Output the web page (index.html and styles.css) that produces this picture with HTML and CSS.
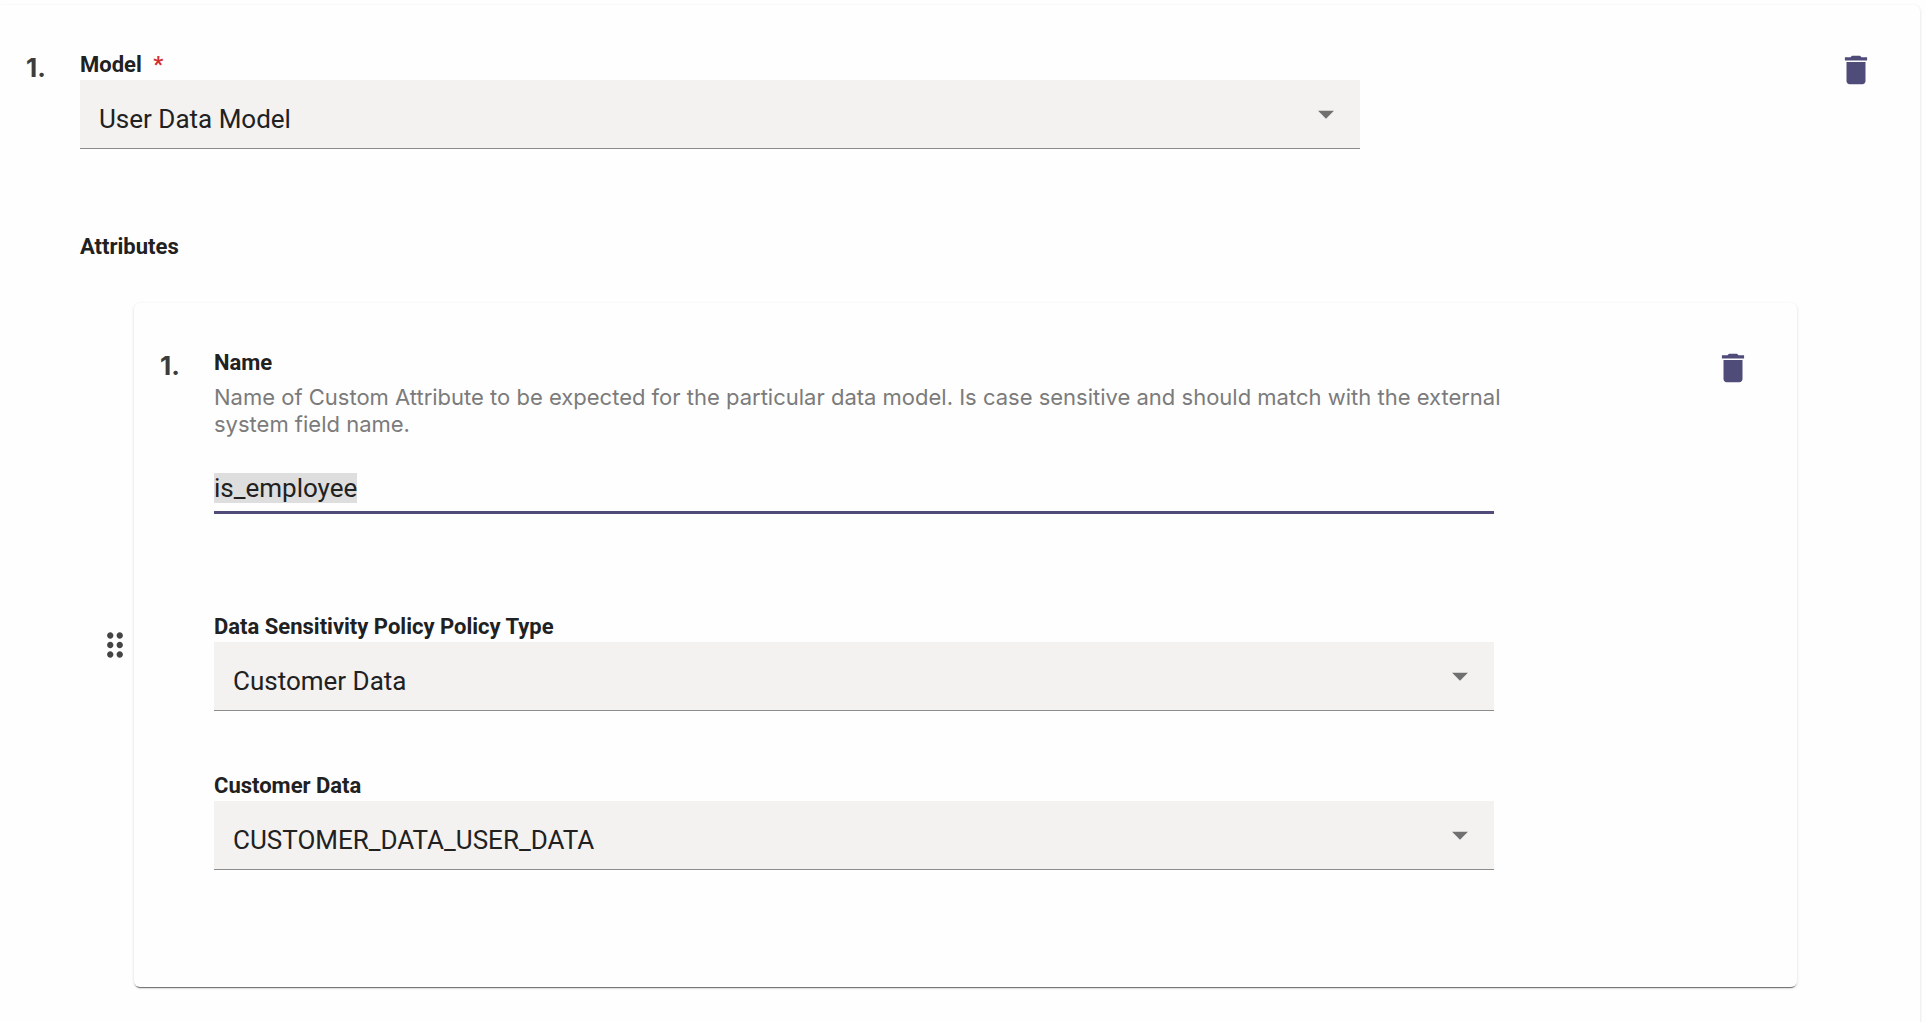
FILE: index.html
```html
<!DOCTYPE html>
<html lang="en">
<head>
  <meta charset="UTF-8">
  <title>Custom attributes</title>
  <link rel="stylesheet" href="styles.css">
</head>
<body>
  <form class="card model-card">
    <span class="number">1.</span>
    <div class="content">
      <div class="model-field">
        <label for="model">Model <span class="required">*</span></label>
        <div class="select-box">
          <select id="model">
            <option>User Data Model</option>
          </select>
          <svg class="arrow" viewBox="0 0 24 24"><path d="M7 10l5 5 5-5z"/></svg>
        </div>
      </div>

      <h2>Attributes</h2>

      <div class="attribute">
        <svg class="drag" viewBox="0 0 24 24"><path d="M11 18c0 1.1-.9 2-2 2s-2-.9-2-2 .9-2 2-2 2 .9 2 2zm-2-8c-1.1 0-2 .9-2 2s.9 2 2 2 2-.9 2-2-.9-2-2-2zm0-6c-1.1 0-2 .9-2 2s.9 2 2 2 2-.9 2-2-.9-2-2-2zm6 4c1.1 0 2-.9 2-2s-.9-2-2-2-2 .9-2 2 .9 2 2 2zm0 2c-1.1 0-2 .9-2 2s.9 2 2 2 2-.9 2-2-.9-2-2-2zm0 6c-1.1 0-2 .9-2 2s.9 2 2 2 2-.9 2-2-.9-2-2-2z"/></svg>
        <div class="card attribute-card">
          <span class="number">1.</span>
          <div class="content">
            <div class="name-field">
              <label for="name">Name</label>
              <p class="hint">Name of Custom Attribute to be expected for the particular data model. Is case sensitive and should match with the external system field name.</p>
              <input type="text" id="name" value="is_employee" spellcheck="false">
            </div>

            <div class="policy-field">
              <label for="policy">Data Sensitivity Policy Policy Type</label>
              <div class="select-box">
                <select id="policy">
                  <option>Customer Data</option>
                </select>
                <svg class="arrow" viewBox="0 0 24 24"><path d="M7 10l5 5 5-5z"/></svg>
              </div>
            </div>

            <div class="customer-field">
              <label for="customer">Customer Data</label>
              <div class="select-box">
                <select id="customer">
                  <option>CUSTOMER_DATA_USER_DATA</option>
                </select>
                <svg class="arrow" viewBox="0 0 24 24"><path d="M7 10l5 5 5-5z"/></svg>
              </div>
            </div>
          </div>
          <button type="button" class="delete" aria-label="Delete attribute">
            <svg viewBox="0 0 24 24"><path d="M6 19c0 1.1.9 2 2 2h8c1.1 0 2-.9 2-2V7H6v12zM19 4h-3.5l-1-1h-5l-1 1H5v2h14V4z"/></svg>
          </button>
        </div>
      </div>
    </div>
    <button type="button" class="delete" aria-label="Delete model">
      <svg viewBox="0 0 24 24"><path d="M6 19c0 1.1.9 2 2 2h8c1.1 0 2-.9 2-2V7H6v12zM19 4h-3.5l-1-1h-5l-1 1H5v2h14V4z"/></svg>
    </button>
  </form>

  <script>
    var nameInput = document.getElementById("name");
    nameInput.focus();
    nameInput.select();
  </script>
</body>
</html>
```

FILE: styles.css
```css
* {
  margin: 0;
  padding: 0;
  box-sizing: border-box;
}

body {
  font-family: Roboto, sans-serif;
  font-size: 26px;
  color: #212121;
  background-color: #fefefe;
}

.card {
  display: flex;
  align-items: flex-start;
  padding-top: 44px;
  border-radius: 6px;
  background-color: #fefefe;
}

.model-card {
  min-height: calc(100vh - 5px);
  margin: 5px 6px 0 0;
  padding-left: 26px;
  padding-right: 45px;
  padding-bottom: 33px;
  border-radius: 0 6px 0 0;
  box-shadow: 0 1px 3px rgba(0, 0, 0, 0.16);
}

.number {
  flex: none;
  width: 54px;
  font-family: Inter, sans-serif;
  font-size: 26px;
  font-weight: bold;
  line-height: 38px;
  color: #3c3c3c;
}

.content {
  flex: 1;
  min-width: 0;
}

label,
h2 {
  display: block;
  font-size: 22px;
  font-weight: bold;
  line-height: 31px;
}

.required {
  margin-left: 6px;
  color: #d32f2f;
}

.model-field {
  margin-bottom: 82px;
}

.name-field {
  margin-bottom: 97px;
}

.policy-field {
  margin-bottom: 59px;
}

.select-box {
  position: relative;
  max-width: 1280px;
}

select {
  display: block;
  appearance: none;
  width: 100%;
  height: 69px;
  padding: 10px 60px 0 19px;
  border: none;
  border-bottom: 1px solid #8c8c8c;
  border-radius: 0;
  background-color: #f3f2f1;
  font: inherit;
  color: inherit;
}

.arrow {
  position: absolute;
  right: 15px;
  top: 15px;
  width: 38px;
  height: 38px;
  fill: #707070;
  pointer-events: none;
}

.hint {
  max-width: 1300px;
  margin-top: 6px;
  font-family: Inter, sans-serif;
  font-size: 22px;
  line-height: 27px;
  color: #7b7b7b;
}

input {
  display: block;
  width: 100%;
  max-width: 1280px;
  height: 50px;
  margin-top: 26px;
  border: none;
  border-bottom: 3px solid #4f4c7a;
  outline: none;
  background: none;
  font: inherit;
  color: inherit;
}

input::selection {
  background-color: #dedede;
  color: #212121;
}

.attribute {
  display: flex;
  align-items: center;
  margin-top: 41px;
  margin-right: 40px;
  padding-left: 16px;
}

.drag {
  flex: none;
  width: 38px;
  height: 38px;
  fill: #444;
}

.attribute-card {
  flex: 1;
  padding-left: 26px;
  padding-right: 45px;
  padding-bottom: 117px;
  box-shadow: 0 3px 1px -2px rgba(0, 0, 0, 0.2), 0 2px 1px -1px rgba(0, 0, 0, 0.4), 0 1px 3px rgba(0, 0, 0, 0.16);
}

.delete {
  flex: none;
  width: 38px;
  height: 38px;
  margin-top: 2px;
  border: none;
  background: none;
  cursor: pointer;
}

.delete svg {
  display: block;
  width: 38px;
  height: 38px;
  fill: #4f4c7a;
}
```
